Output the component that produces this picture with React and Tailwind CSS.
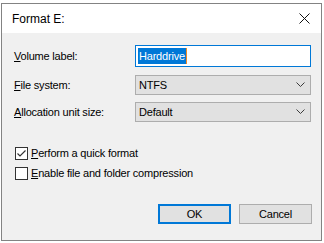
import { useState } from 'react';

function Chevron() {
  return (
    <svg width="9" height="6" viewBox="0 0 9 6" className="text-[#3c3c3c]">
      <path d="M0.5 0.5 L4.5 4.5 L8.5 0.5" fill="none" stroke="currentColor" strokeWidth="1" />
    </svg>
  );
}

function Select({ value }) {
  return (
    <div className="flex h-[20px] w-[176px] items-center justify-between border border-[#adadad] bg-[#e1e1e1] pl-[3px] pr-[5px] text-black">
      <span>{value}</span>
      <Chevron />
    </div>
  );
}

function Check({ checked, children }) {
  return (
    <div className="flex h-[13px] items-center gap-[3px]">
      <div className="flex h-[13px] w-[13px] items-center justify-center border border-[#333] bg-white">
        {checked && (
          <svg width="11" height="11" viewBox="0 0 11 11">
            <path d="M1.5 5.5 L4 8 L9.5 2.5" fill="none" stroke="#333" strokeWidth="1.2" />
          </svg>
        )}
      </div>
      <span className="leading-none text-black">{children}</span>
    </div>
  );
}

export default function App() {
  const [quick] = useState(true);

  return (
    <div className="h-[243px] w-[324px] bg-white pl-[1px] pt-[3px]" style={{ fontFamily: '"Liberation Sans", Arial, sans-serif' }}>
      <div className="flex h-[238px] w-[321px] flex-col border border-[#838383] bg-[#f0f0f0]">
        <div className="flex h-[29px] items-center justify-between bg-white pl-[10px] pr-[11px]">
          <span className="text-[12px] text-black">Format E:</span>
          <svg width="11" height="11" viewBox="0 0 11 11">
            <path d="M0.5 0.5 L10.5 10.5 M10.5 0.5 L0.5 10.5" stroke="#111" strokeWidth="1" />
          </svg>
        </div>

        <div className="flex flex-col pl-[12px] pt-[12px] text-[11px] tracking-[-0.2px] text-black">
          <div className="flex h-[22px] items-center">
            <span className="w-[121px]"><span className="underline">V</span>olume label:</span>
            <div className="flex h-[22px] w-[176px] items-center border border-[#0078d7] bg-white pl-[2px]">
              <span className="bg-[#0078d7] px-[1px] leading-[16px] text-white">Harddrive</span>
              <span className="h-[16px] w-[1px] bg-[#f08a24]"></span>
            </div>
          </div>

          <div className="mt-[8px] flex h-[20px] items-center">
            <span className="w-[121px]"><span className="underline">F</span>ile system:</span>
            <Select value="NTFS" />
          </div>

          <div className="mt-[7px] flex h-[20px] items-center">
            <span className="w-[121px]"><span className="underline">A</span>llocation unit size:</span>
            <Select value="Default" />
          </div>

          <div className="mt-[25px] flex flex-col gap-[7px] pl-[1px]">
            <Check checked={quick}><span className="underline">P</span>erform a quick format</Check>
            <Check checked={false}><span className="underline">E</span>nable file and folder compression</Check>
          </div>

          <div className="mt-[24px] flex justify-end gap-[8px] pr-[9px]">
            <div className="flex h-[20px] w-[73px] items-center justify-center border-2 border-[#0078d7] bg-[#e1e1e1]">OK</div>
            <div className="flex h-[20px] w-[73px] items-center justify-center border border-[#adadad] bg-[#e1e1e1]">Cancel</div>
          </div>
        </div>
      </div>
    </div>
  );
}
